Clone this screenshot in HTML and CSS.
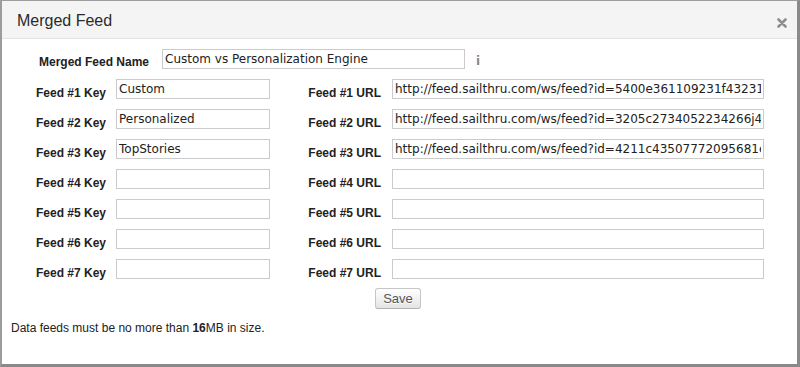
FILE: index.html
```html
<!DOCTYPE html>
<html>
<head>
<meta charset="utf-8">
<title>Merged Feed</title>
<link rel="stylesheet" href="styles.css">
</head>
<body>
<div class="modal">
  <div class="modal-header">
    <h3 class="modal-title">Merged Feed</h3>
    <span class="close" aria-label="Close">
      <svg width="10" height="10" viewBox="0 0 10 10"><path d="M1.5 1.5 L8.5 8.5 M8.5 1.5 L1.5 8.5" stroke="#8e8e8e" stroke-width="2.6" stroke-linecap="round"/></svg>
    </span>
  </div>
  <div class="modal-body">
    <div class="name-row">
      <label class="name-label">Merged Feed Name</label>
      <input class="field name-input" type="text" value="Custom vs Personalization Engine">
      <span class="info">i</span>
    </div>
    <div class="feeds">
      <label class="lbl key-lbl">Feed #1 Key</label>
      <input class="field key" type="text" value="Custom">
      <label class="lbl url-lbl">Feed #1 URL</label>
      <input class="field url" type="text" value="http://feed.sailthru.com/ws/feed?id=5400e361109231f43231d2e8">

      <label class="lbl key-lbl">Feed #2 Key</label>
      <input class="field key" type="text" value="Personalized">
      <label class="lbl url-lbl">Feed #2 URL</label>
      <input class="field url" type="text" value="http://feed.sailthru.com/ws/feed?id=3205c2734052234266j4a8">

      <label class="lbl key-lbl">Feed #3 Key</label>
      <input class="field key" type="text" value="TopStories">
      <label class="lbl url-lbl">Feed #3 URL</label>
      <input class="field url" type="text" value="http://feed.sailthru.com/ws/feed?id=4211c43507772095681e2">

      <label class="lbl key-lbl">Feed #4 Key</label>
      <input class="field key" type="text" value="">
      <label class="lbl url-lbl">Feed #4 URL</label>
      <input class="field url" type="text" value="">

      <label class="lbl key-lbl">Feed #5 Key</label>
      <input class="field key" type="text" value="">
      <label class="lbl url-lbl">Feed #5 URL</label>
      <input class="field url" type="text" value="">

      <label class="lbl key-lbl">Feed #6 Key</label>
      <input class="field key" type="text" value="">
      <label class="lbl url-lbl">Feed #6 URL</label>
      <input class="field url" type="text" value="">

      <label class="lbl key-lbl">Feed #7 Key</label>
      <input class="field key" type="text" value="">
      <label class="lbl url-lbl">Feed #7 URL</label>
      <input class="field url" type="text" value="">
    </div>
    <div class="actions">
      <button class="btn" type="button">Save</button>
    </div>
    <p class="note">Data feeds must be no more than <b>16</b>MB in size.</p>
  </div>
</div>
</body>
</html>
```

FILE: styles.css
```css
* { box-sizing: border-box; }

html, body {
  margin: 0;
  padding: 0;
  background: #ffffff;
}

body {
  font-family: "Liberation Sans", Arial, Helvetica, sans-serif;
  color: #222;
}

.modal {
  width: 800px;
  height: 367px;
  background: #fff;
  border-style: solid;
  border-color: #9c9c9c;
  border-width: 1px 3px 3px 2px;
  border-right-color: #8a8a8a;
  border-bottom-color: #8a8a8a;
}

.modal-header {
  height: 38px;
  background: #f4f4f4;
  border-bottom: 1px solid #e3e3e3;
  display: flex;
  justify-content: space-between;
  align-items: flex-start;
  padding: 0 10px 0 15px;
}

.modal-title {
  margin: 0;
  padding-top: 11px;
  font-size: 16px;
  line-height: 18px;
  font-weight: normal;
  color: #2a2a2a;
}

.close {
  display: block;
  margin-top: 17px;
  width: 10px;
  height: 10px;
}
.close svg { display: block; }

.modal-body {
  padding: 10px 0 0 0;
}

.name-row {
  display: flex;
  align-items: flex-start;
  height: 20px;
  padding-left: 37px;
}

.name-label {
  font-size: 12px;
  font-weight: bold;
  line-height: 20px;
  padding-top: 3px;
  width: 123px;
  color: #222;
}

.field {
  height: 20px;
  border: 1px solid #cbcbcb;
  background: #fff;
  font-family: "DejaVu Sans", "Lucida Grande", sans-serif;
  font-size: 12px;
  color: #222;
  padding: 0 2px;
  margin: 0;
  outline: none;
  border-radius: 0;
}

.name-input {
  width: 303px;
}

.info {
  margin-left: 11px;
  font-family: "DejaVu Sans", sans-serif;
  font-size: 12px;
  font-weight: bold;
  color: #8a8a8a;
  line-height: 20px;
  padding-top: 2px;
}

.feeds {
  margin-top: 10px;
  display: grid;
  grid-template-columns: 114px 154px 122px 372px;
  grid-auto-rows: 20px;
  row-gap: 10px;
}

.lbl {
  font-size: 12px;
  font-weight: bold;
  line-height: 20px;
  padding-top: 4px;
  text-align: right;
  white-space: nowrap;
  color: #222;
}
.key-lbl { padding-right: 10px; }
.url-lbl { padding-right: 11px; }

.key, .url { width: 100%; }

.actions {
  display: flex;
  justify-content: center;
  margin-top: 9px;
  padding-right: 3px;
}

.btn {
  width: 46px;
  height: 21px;
  padding: 0;
  font-family: "Liberation Sans", Arial, sans-serif;
  font-size: 13px;
  color: #555;
  text-shadow: 0 1px 0 #fff;
  background: linear-gradient(#ffffff, #e4e4e4);
  border: 1px solid #c6c6c6;
  border-bottom-color: #b3b3b3;
  border-radius: 3px;
}

.note {
  margin: 11px 0 0 9px;
  font-size: 12px;
  line-height: 16px;
  color: #222;
}
.note b { font-weight: bold; }
```
